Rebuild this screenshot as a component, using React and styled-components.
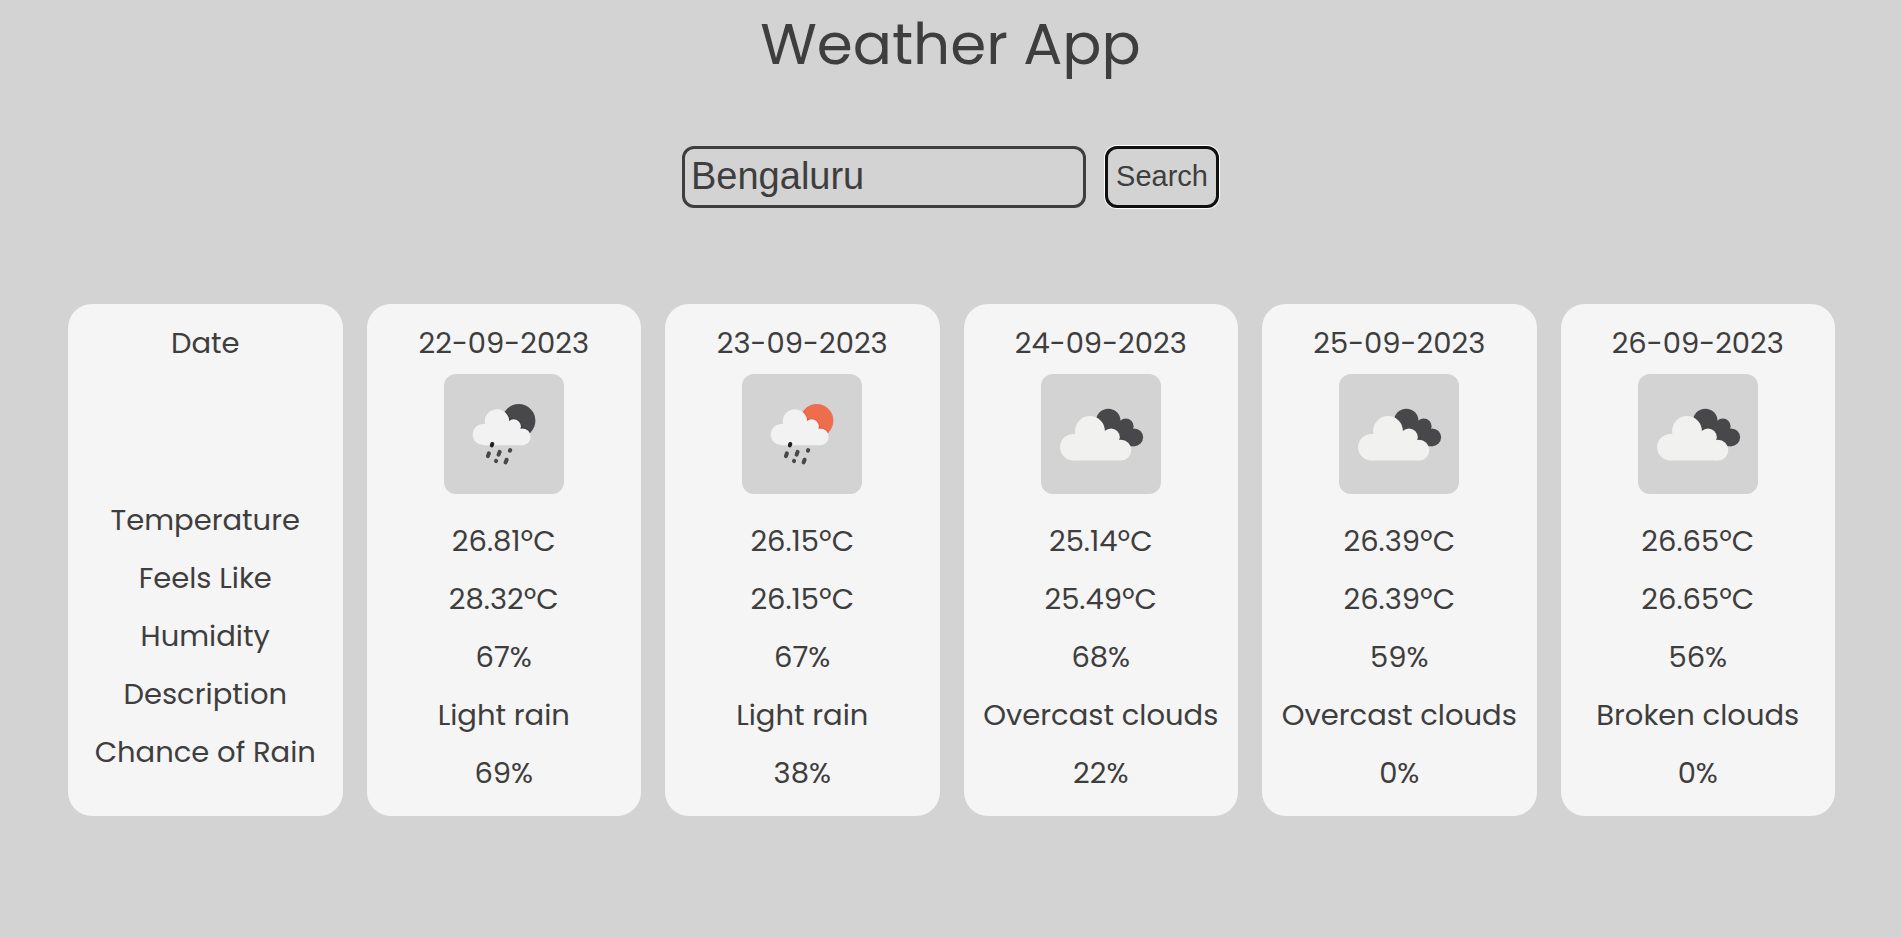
import React, { useState } from "react";
import styled, { createGlobalStyle } from "styled-components";

const INK = "#3e3e3e";
const PAGE = "#d3d3d3";

const GlobalStyle = createGlobalStyle`
  *, *::before, *::after { box-sizing: border-box; }
  body {
    margin: 0;
    background: ${PAGE};
    color: ${INK};
    font-family: Poppins, Inter, "Open Sans", sans-serif;
  }
`;

const Page = styled.main`
  display: flex;
  flex-direction: column;
  align-items: center;
  min-height: 100vh;
`;

const Title = styled.h1`
  margin: 0;
  font-size: 58px;
  line-height: 88px;
  font-weight: 400;
`;

const SearchForm = styled.form`
  display: flex;
  align-items: stretch;
  gap: 19px;
  height: 62px;
  margin-top: 58px;
`;

const CityInput = styled.input`
  width: 404px;
  padding: 0 6px 2px;
  border: 3px solid ${INK};
  border-radius: 12px;
  background: transparent;
  color: ${INK};
  font-family: Arial, "Liberation Sans", sans-serif;
  font-size: 38px;
  outline: none;
`;

const SearchButton = styled.button`
  width: 114px;
  padding: 0 0 2px;
  border: 3px solid #101010;
  border-radius: 12px;
  background: transparent;
  color: ${INK};
  font-family: Arial, "Liberation Sans", sans-serif;
  font-size: 29px;
  box-shadow: 0 0 0 1px #fff;
  cursor: pointer;
`;

const Forecast = styled.section`
  display: grid;
  grid-template-columns: repeat(6, minmax(0, 1fr));
  gap: 24px;
  width: 100%;
  margin-top: 96px;
  padding: 0 66px 0 68px;
`;

const Card = styled.article`
  display: flex;
  flex-direction: column;
  align-items: center;
  padding: 17px 0 14px;
  border-radius: 24px;
  background: #f5f5f5;
`;

const Row = styled.p`
  margin: 0;
  font-size: 29px;
  line-height: ${({ $date }) => ($date ? "44px" : "58px")};
  white-space: nowrap;
`;

const Tile = styled.div`
  width: 120px;
  height: ${({ $empty }) => ($empty ? "99px" : "120px")};
  margin: 9px 0 18px;
  border-radius: 12px;
  background: ${({ $empty }) => ($empty ? "transparent" : PAGE)};
`;

const Drawing = styled.svg`
  display: block;
  width: 100%;
  height: 100%;
`;

function RainIcon({ disc, edge }) {
  return (
    <Drawing viewBox="0 0 120 120" role="img" aria-label="Light rain">
      <defs>
        <clipPath id={`disc-${disc.slice(1)}`}>
          <circle cx="74.7" cy="46.7" r="16.7" />
        </clipPath>
      </defs>
      <circle cx="74.7" cy="46.7" r="16.7" fill={disc} />
      <g fill={edge} clipPath={`url(#disc-${disc.slice(1)})`}>
        <circle cx="53" cy="47.5" r="13" />
        <circle cx="69.7" cy="52.5" r="8" />
        <circle cx="78.3" cy="62.8" r="9.3" />
      </g>
      <g fill="#f2f2f2">
        <circle cx="39.3" cy="60.5" r="10.6" />
        <circle cx="53" cy="47.5" r="12.2" />
        <circle cx="69.7" cy="52.5" r="7.2" />
        <circle cx="78.3" cy="62.8" r="8.4" />
        <path d="M39.300 50L64 47L73 56L78.300 71.200H39.300z" />
      </g>
      <g stroke="#48484a" strokeWidth="4" strokeLinecap="round">
        <path d="M48.300 70l-.5 1.400" stroke="#222222" />
        <path d="M44.900 79.300l-1 2.800M55.600 77.900l-1 2.800M66.200 76l-.3.700M52.100 86.800l-.1.300M62.600 85.700l-1 2.700" />
      </g>
    </Drawing>
  );
}

function CloudsIcon({ label }) {
  return (
    <Drawing viewBox="0 0 120 120" role="img" aria-label={label}>
      <g fill="#48484a">
        <circle cx="67.3" cy="47" r="12.3" />
        <circle cx="84.8" cy="52.2" r="7.8" />
        <circle cx="93.2" cy="63.3" r="8.9" />
        <path d="M67 47H80L94 57V72.200H75z" />
      </g>
      <g fill="#f1f1ef">
        <circle cx="32.4" cy="73.200" r="13.3" />
        <circle cx="49" cy="57" r="14.9" />
        <circle cx="70" cy="63.3" r="8.8" />
        <circle cx="79.9" cy="76.100" r="10.4" />
        <path d="M32.400 60L62 56L72 64L80 86.500H32.400z" />
      </g>
    </Drawing>
  );
}

const LABELS = ["Temperature", "Feels Like", "Humidity", "Description", "Chance of Rain"];

const DAYS = [
  { date: "22-09-2023", icon: "night", values: ["26.81ºC", "28.32ºC", "67%", "Light rain", "69%"] },
  { date: "23-09-2023", icon: "day", values: ["26.15ºC", "26.15ºC", "67%", "Light rain", "38%"] },
  { date: "24-09-2023", icon: "clouds", values: ["25.14ºC", "25.49ºC", "68%", "Overcast clouds", "22%"] },
  { date: "25-09-2023", icon: "clouds", values: ["26.39ºC", "26.39ºC", "59%", "Overcast clouds", "0%"] },
  { date: "26-09-2023", icon: "clouds", values: ["26.65ºC", "26.65ºC", "56%", "Broken clouds", "0%"] },
];

function WeatherIcon({ kind, label }) {
  if (kind === "clouds") return <CloudsIcon label={label} />;
  if (kind === "day") return <RainIcon disc="#ec6e4c" edge="#e2552f" />;
  return <RainIcon disc="#48484a" edge="#38383a" />;
}

export default function App() {
  const [city, setCity] = useState("Bengaluru");
  return (
    <Page>
      <GlobalStyle />
      <Title>Weather App</Title>
      <SearchForm onSubmit={(event) => event.preventDefault()}>
        <CityInput
          aria-label="City"
          value={city}
          onChange={(event) => setCity(event.target.value)}
        />
        <SearchButton type="submit">Search</SearchButton>
      </SearchForm>
      <Forecast>
        <Card>
          <Row $date>Date</Row>
          <Tile $empty />
          {LABELS.map((label) => (
            <Row key={label}>{label}</Row>
          ))}
        </Card>
        {DAYS.map((day) => (
          <Card key={day.date}>
            <Row $date>{day.date}</Row>
            <Tile>
              <WeatherIcon kind={day.icon} label={day.values[3]} />
            </Tile>
            {day.values.map((value, index) => (
              <Row key={LABELS[index]}>{value}</Row>
            ))}
          </Card>
        ))}
      </Forecast>
    </Page>
  );
}
